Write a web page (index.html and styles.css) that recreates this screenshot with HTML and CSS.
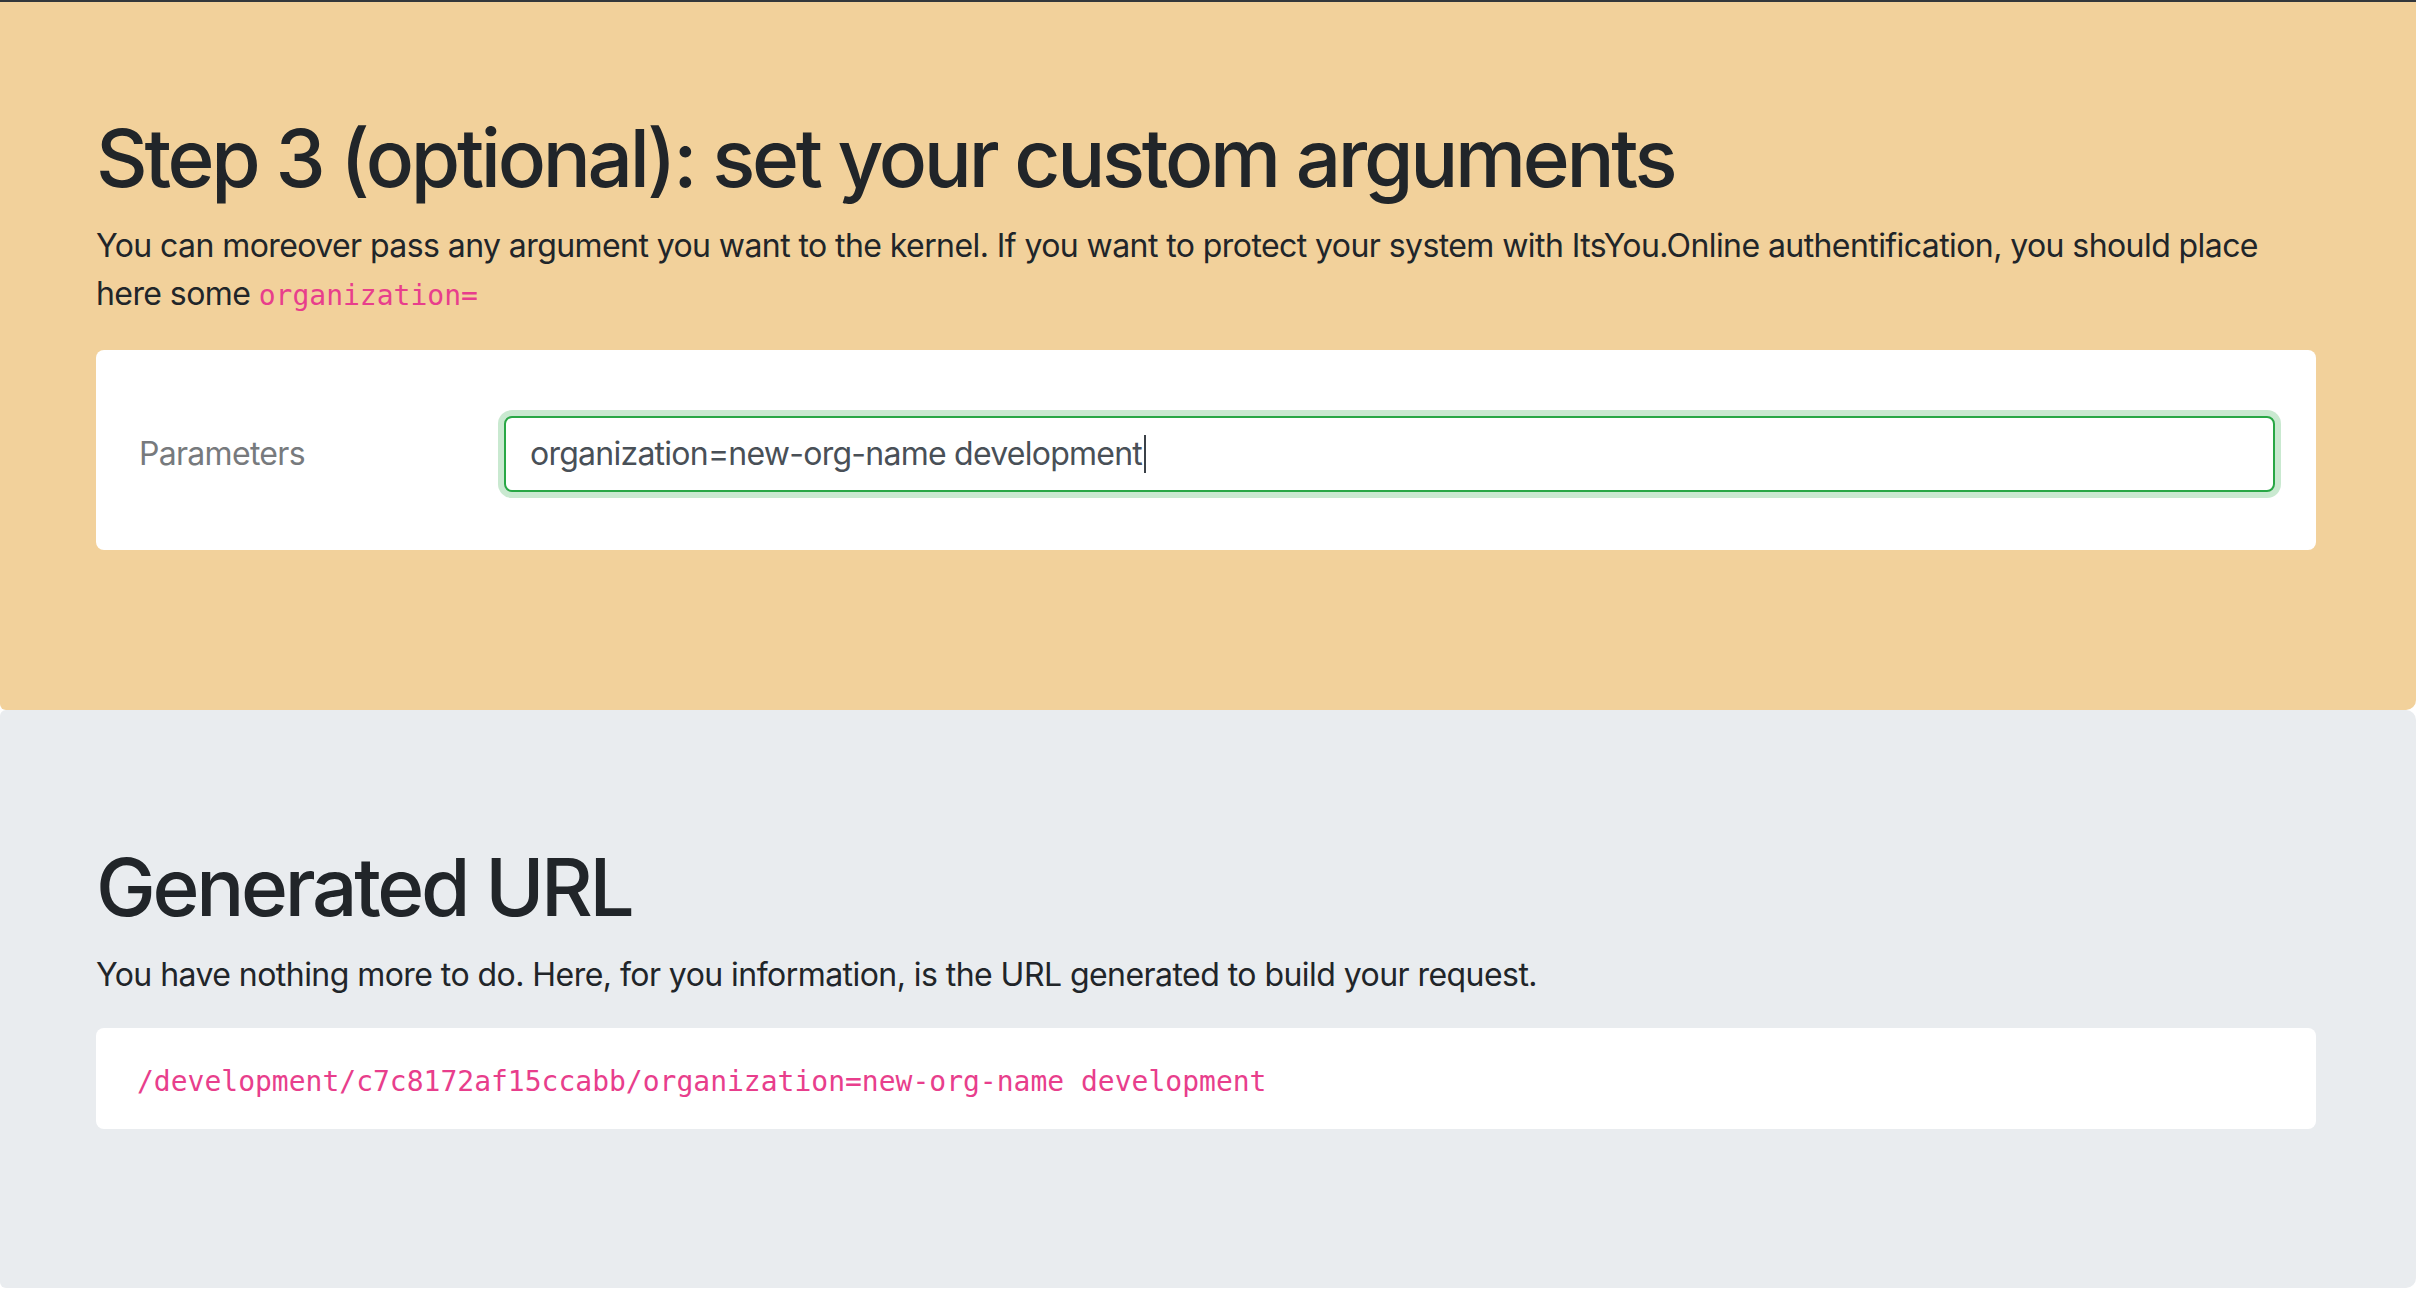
FILE: index.html
```html
<!DOCTYPE html>
<html lang="en">
<head>
<meta charset="utf-8">
<title>Step 3 (optional): set your custom arguments</title>
<link rel="stylesheet" href="styles.css">
</head>
<body>
<div class="topbar"></div>
<section class="jumbo jumbo-warn">
  <div class="container">
    <h1 class="title">Step 3 (optional): set your custom arguments</h1>
    <p class="lead-text">You can moreover pass any argument you want to the kernel. If you want to protect your system with ItsYou.Online authentification, you should place here some <code class="code">organization=</code></p>
    <div class="card card-form">
      <div class="form-row">
        <label class="col-label">Parameters</label>
        <div class="col-input">
          <div class="input is-valid">organization=new-org-name development<span class="caret"></span></div>
        </div>
      </div>
    </div>
  </div>
</section>
<section class="jumbo jumbo-light">
  <div class="container">
    <h1 class="title title-url">Generated URL</h1>
    <p class="lead-text lead-url">You have nothing more to do. Here, for you information, is the URL generated to build your request.</p>
    <div class="card card-code">
      <code class="code code-block">/development/c7c8172af15ccabb/organization=new-org-name development</code>
    </div>
  </div>
</section>
</body>
</html>
```
FILE: styles.css
```css
* { box-sizing: border-box; }
html, body { margin: 0; padding: 0; }
body {
  background: #ffffff;
  color: #212529;
  font-family: Inter, "Noto Sans", "Liberation Sans", sans-serif;
  font-size: 32px;
  line-height: 48px;
  letter-spacing: -0.6px;
  height: 1298px;
  overflow: hidden;
}
.topbar {
  height: 2px;
  background: #33373b;
}
.jumbo-warn {
  background: #f2d19b;
  padding: 108px 0 160px;
  border-radius: 0 0 10px 6px;
}
.jumbo-light {
  background: #e9ecef;
  padding: 129px 0 159px;
  border-radius: 6px 10px 10px 6px;
}
.container {
  width: 2220px;
  margin-left: 96px;
}
.title {
  margin: 0 0 16px;
  font-size: 80px;
  line-height: 96px;
  font-weight: 500;
  letter-spacing: -3.3px;
}
.lead-text {
  margin: 0 0 32px;
  letter-spacing: -0.58px;
}
.lead-url {
  margin-bottom: 29px;
  letter-spacing: -0.55px;
}
.code {
  font-family: "DejaVu Sans Mono", "Liberation Mono", monospace;
  font-size: 28px;
  line-height: 1;
  letter-spacing: 0;
  color: #e83e8c;
}
.card {
  background: #ffffff;
  border: 1px solid transparent;
  border-radius: 8px;
}
.card-form {
  padding: 65px 40px 57px;
}
.form-row {
  display: flex;
  align-items: center;
}
.col-label {
  width: 367px;
  flex: none;
  padding-left: 2px;
  color: #777a7d;
  letter-spacing: -0.7px;
}
.col-input {
  flex: 1;
}
.input {
  height: 76px;
  display: flex;
  align-items: center;
  padding: 0 24px;
  border: 2px solid #28a745;
  border-radius: 8px;
  box-shadow: 0 0 0 6px rgba(40, 167, 69, 0.25);
  color: #495057;
  background: #fff;
  letter-spacing: -0.75px;
}
.caret {
  display: inline-block;
  width: 2px;
  height: 38px;
  margin-left: 2px;
  background: #3b4148;
}
.card-code {
  padding: 32px 40px 25px;
}
.code-block {
  display: block;
  line-height: 42px;
}
```
